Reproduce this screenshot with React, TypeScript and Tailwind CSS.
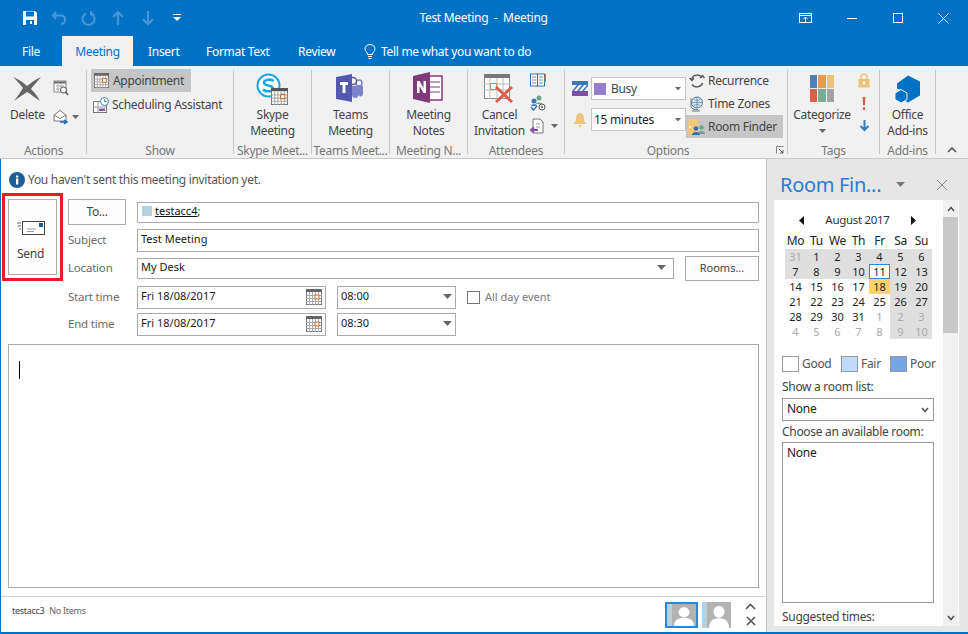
import React from "react";

const Cal = ({ s = 16, dark = "#666" }: { s?: number; dark?: string }) => (
  <svg width={s} height={s} viewBox="0 0 16 16" className="shrink-0">
    <rect x="0.5" y="0.5" width="15" height="15" fill="#fff" stroke="#777" />
    <rect x="0" y="0" width="16" height="3" fill={dark} />
    <path d="M0.5 6.5H15.5M0.5 9.5H15.5M0.5 12.5H15.5M3.5 3V16M6.5 3V16M9.5 3V16M12.5 3V16" stroke="#aaa" />
    <rect x="9" y="6" width="4" height="4" fill="#fff" stroke="#d2691e" />
  </svg>
);

const Big = ({ icon, lines }: { icon: React.ReactNode; lines: string[] }) => (
  <div className="flex flex-col items-center">
    <div className="h-[37px] flex items-center justify-center">{icon}</div>
    {lines.map((l) => (
      <div key={l} className="leading-[16px] whitespace-nowrap">{l}</div>
    ))}
  </div>
);

const Group = ({ w, label, children, className = "", labelClass = "" }: { w: string; label: string; children: React.ReactNode; className?: string; labelClass?: string }) => (
  <div className={`${w} shrink-0 h-[84px] border-r border-[#c6c6c6] flex flex-col relative`}>
    <div className={`h-[72px] flex ${className}`}>{children}</div>
    <div className={`h-[12px] leading-[17px] text-center text-[#777] whitespace-nowrap overflow-visible ${labelClass}`}>{label}</div>
  </div>
);

const SmallRow = ({ icon, text, active }: { icon: React.ReactNode; text: string; active?: boolean }) => (
  <div className={`h-[23px] flex items-center gap-[3px] pl-[2px] whitespace-nowrap ${active ? "bg-[#c6c6c6]" : ""}`}>
    <span className="w-[17px] flex justify-center">{icon}</span>
    {text}
  </div>
);

const Caret = ({ c = "#666", w = 7 }: { c?: string; w?: number }) => (
  <svg width={w} height={w / 2 + 0.5} viewBox="0 0 8 4.5" className="shrink-0">
    <path d="M0 0H8L4 4.5Z" fill={c} />
  </svg>
);

const Field = ({ className = "", children }: { className?: string; children?: React.ReactNode }) => (
  <div className={`border border-[#ababab] bg-white flex items-center pl-[3px] pb-[2px] text-[#1a1a1a] text-[11px] tracking-normal ${className}`}>{children}</div>
);

const Btn = ({ className = "", children }: { className?: string; children: React.ReactNode }) => (
  <div className={`border border-[#ababab] bg-[#fdfdfd] flex items-center justify-center text-[#444] ${className}`}>{children}</div>
);

const Label = ({ children }: { children: React.ReactNode }) => (
  <div className="w-[69px] shrink-0 text-[#6a6a6a] text-[11.5px] tracking-[-0.2px] pb-[2px] whitespace-nowrap">{children}</div>
);

const Avatar = ({ selected }: { selected?: boolean }) => (
  <div className={selected ? "border-2 border-[#2b88d8] w-[33px] h-[26px] flex shrink-0" : "w-[29px] h-[26px] flex ml-[4px] shrink-0"}>
    <div className="w-[5px] h-full bg-[#b6d0dc]" />
    <svg viewBox="0 0 24 24" className="flex-1 h-full bg-[#b3b3b3]" preserveAspectRatio="none">
      <circle cx="12" cy="9" r="5.5" fill="#fff" />
      <path d="M2 24C2 17 7 15 12 15S22 17 22 24Z" fill="#fff" />
    </svg>
  </div>
);

const days: { t: string; bg?: boolean; dim?: boolean; today?: boolean; sel?: boolean }[] = [];
const rows = [
  ["31", "1", "2", "3", "4", "5", "6"],
  ["7", "8", "9", "10", "11", "12", "13"],
  ["14", "15", "16", "17", "18", "19", "20"],
  ["21", "22", "23", "24", "25", "26", "27"],
  ["28", "29", "30", "31", "1", "2", "3"],
  ["4", "5", "6", "7", "8", "9", "10"],
];
rows.forEach((r, ri) =>
  r.forEach((t, ci) => {
    const weekend = ci >= 5;
    days.push({
      t,
      bg: ri < 2 || weekend,
      dim: (ri === 0 && ci === 0) || (ri === 4 && ci >= 4) || ri === 5,
      today: t === "11",
      sel: ri === 2 && ci === 4,
    });
  })
);

export default function App() {
  return (
    <div className="w-[968px] h-[634px] bg-[#0072c6] flex flex-col overflow-hidden font-['Noto_Sans',sans-serif] text-[12px] tracking-[-0.3px] text-[#444]">
      {/* title bar */}
      <div className="h-[36px] flex items-center relative text-white shrink-0">
        <div className="flex items-center pl-[22px] gap-[13px]">
          <svg width="16" height="16" viewBox="0 0 16 16">
            <path d="M1 1H13L15 3V15H1Z" fill="#fff" />
            <rect x="4" y="1.5" width="8" height="5" fill="#0072c6" />
            <rect x="4" y="10" width="8" height="5" fill="#0072c6" />
            <rect x="8" y="11" width="2" height="3" fill="#fff" />
          </svg>
          <svg width="16" height="16" viewBox="0 0 16 16" fill="none" stroke="#4a97d6" strokeWidth="2">
            <path d="M5 2L2 5.5L5 9M2 5.5H10C13 5.5 14 8 14 10C14 12.5 12 14 10 14" />
          </svg>
          <svg width="16" height="16" viewBox="0 0 16 16" fill="none" stroke="#4a97d6" strokeWidth="2">
            <path d="M6 3.5A6 6 0 1 0 11 3.5M11 1V4.5H14.5" />
          </svg>
          <svg width="16" height="16" viewBox="0 0 16 16" fill="none" stroke="#4a97d6" strokeWidth="2" className="ml-[1px]">
            <path d="M3 7L8 2L13 7M8 2V15" />
          </svg>
          <svg width="16" height="16" viewBox="0 0 16 16" fill="none" stroke="#4a97d6" strokeWidth="2" className="ml-[1px]">
            <path d="M3 9L8 14L13 9M8 14V1" />
          </svg>
          <svg width="10" height="10" viewBox="0 0 10 10" className="ml-[3px]">
            <path d="M1 1H9V2H1ZM1 4H9L5 8Z" fill="#fff" />
          </svg>
        </div>
        <div className="absolute left-0 right-0 top-[9px] text-center whitespace-pre pr-[1px] leading-[17px]">Test Meeting  -  Meeting</div>
        <div className="ml-auto flex items-center h-full mr-[19px]">
          <svg width="13" height="11" viewBox="0 0 13 11" fill="none" stroke="#fff" className="mr-[35px]">
            <rect x="0.5" y="0.5" width="12" height="9" />
            <path d="M0 2.5H13M6.5 9V4M4.5 6L6.5 4L8.5 6" />
          </svg>
          <div className="w-[10px] h-px bg-white mr-[36px]" />
          <div className="w-[10px] h-[10px] border border-white mr-[35px]" />
          <svg width="11" height="11" viewBox="0 0 11 11" stroke="#fff" fill="none"><path d="M0.5 0.5L10.5 10.5M10.5 0.5L0.5 10.5" /></svg>
        </div>
      </div>
      {/* tabs */}
      <div className="h-[30px] flex items-center text-white shrink-0 whitespace-nowrap">
        <div className="ml-[22px] w-[40px] pt-px">File</div>
        <div className="w-[71px] h-full bg-[#f1f1f1] text-[#0072c6] flex items-center justify-center pt-px">Meeting</div>
        <div className="ml-[15px] w-[58px] pt-px">Insert</div>
        <div className="w-[92px] pt-px">Format Text</div>
        <div className="w-[66px] pt-px">Review</div>
        <svg width="12" height="15" viewBox="0 0 12 15" fill="none" stroke="#fff" className="mr-[5px]">
          <path d="M3.5 10.5C3.5 8 1 7.5 1 4.8A5 4.3 0 0 1 11 4.8C11 7.5 8.5 8 8.5 10.5ZM4 12.5H8M4.5 14.5H7.5" />
        </svg>
        <div className="pt-px">Tell me what you want to do</div>
      </div>
      {/* ribbon */}
      <div className="h-[93px] bg-[#f1f1f1] border-b border-[#c8c8c8] pl-[1px] pt-[4px] flex shrink-0 relative">
        <Group w="w-[86px]" label="Actions" className="pl-[9px] gap-[8px]">
          <Big
            lines={["Delete"]}
            icon={
              <svg width="30" height="26" viewBox="0 0 30 26">
                <path d="M1 1C8 4 12 7 15 10C20 6 24 3 29 1C25 6 21 10 19 13C23 17 26 21 28 25C23 22 19 18 15 16C11 19 6 22 2 25C5 21 8 17 11 12C8 8 5 5 1 1Z" fill="#666" />
              </svg>
            }
          />
          <div className="flex flex-col gap-[13px] pt-[10px]">
            <svg width="16" height="16" viewBox="0 0 16 16" fill="none">
              <rect x="1" y="1" width="12" height="11" fill="#fff" stroke="#888" />
              <path d="M1 2.5H13" stroke="#666" strokeWidth="2" />
              <path d="M3 6H11M3 9H7M5 4V12M8 4V8" stroke="#aaa" />
              <circle cx="10.5" cy="10" r="3" fill="#fff" stroke="#555" />
              <path d="M12.5 12L15 15" stroke="#555" strokeWidth="1.5" />
            </svg>
            <div className="flex items-center gap-[3px]">
              <svg width="16" height="16" viewBox="0 0 16 16" fill="none">
                <path d="M1 6L7 1.5L13 6V12H1Z" fill="#fff" stroke="#777" />
                <path d="M1 6L7 9.5L13 6" stroke="#777" />
                <path d="M7 13H13M11 11L14 13L11 15" stroke="#1f6fb5" strokeWidth="1.5" />
              </svg>
              <Caret />
            </div>
          </div>
        </Group>
        <Group w="w-[147px]" label="Show" className="pl-[4px] pr-[42px] flex-col">
          <div className="-mt-[1px] mb-[1px] w-[100px]">
            <SmallRow active text="Appointment" icon={<Cal s={15} />} />
          </div>
          <div>
            <SmallRow
              text="Scheduling Assistant"
              icon={
                <svg width="16" height="16" viewBox="0 0 16 16" fill="none">
                  <rect x="0.5" y="4.5" width="13" height="11" fill="#fff" stroke="#777" />
                  <path d="M0.5 10H13.5M5 4.5V15.5" stroke="#999" />
                  <rect x="6" y="11.5" width="6" height="2.5" fill="#8a5aa8" />
                  <circle cx="11.5" cy="4.5" r="4" fill="#fff" stroke="#4a7fb5" />
                  <path d="M11.5 2.5V4.5H13.5" stroke="#4a7fb5" />
                </svg>
              }
            />
          </div>
        </Group>
        <Group w="w-[78px]" label="Skype Meet..." className="justify-center">
          <Big
            lines={["Skype", "Meeting"]}
            icon={
              <svg width="33" height="33" viewBox="0 0 33 33" className="mt-[1px]">
                <circle cx="12.5" cy="12.5" r="11" fill="#fff" stroke="#1ca6e6" strokeWidth="2" />
                <path d="M17.5 8C15.5 6 8.5 6 8 9.5C7.5 13.5 17.5 11.5 17 16C16.5 19 9.5 19 7 16.5" fill="none" stroke="#1ca6e6" strokeWidth="2.6" />
                <g transform="translate(15 15)"><Cal s={17} dark="#555" /></g>
              </svg>
            }
          />
        </Group>
        <Group w="w-[78px]" label="Teams Meet..." className="justify-center">
          <Big
            lines={["Teams", "Meeting"]}
            icon={
              <svg width="30" height="30" viewBox="0 0 30 30" className="-mt-[1px]">
                <circle cx="24" cy="10" r="3" fill="#fff" stroke="#7b83c8" strokeWidth="1.5" />
                <circle cx="18" cy="8" r="3.5" fill="#fff" stroke="#5558af" strokeWidth="1.5" />
                <path d="M17 13H28V21C28 24 24 24 23 22V24C21 26 17 25 17 22Z" fill="#7b83c8" />
                <path d="M1 4L17 1V29L1 26Z" fill="#5558af" />
                <path d="M5 9H13V12H10.5V20H7.5V12H5Z" fill="#fff" />
              </svg>
            }
          />
        </Group>
        <Group w="w-[78px]" label="Meeting N..." className="justify-center">
          <Big
            lines={["Meeting", "Notes"]}
            icon={
              <svg width="30" height="32" viewBox="0 0 30 32" className="-mt-[1px]">
                <rect x="14" y="4" width="15" height="24" fill="#fff" stroke="#80397b" strokeWidth="1.5" />
                <path d="M15 10H27M15 15H27M15 20H27" stroke="#80397b" />
                <path d="M0 4L17 0V31L0 27Z" fill="#80397b" />
                <path d="M4 21V9H6.5L10.5 16V9H13V21H10.5L6.5 14V21Z" fill="#fff" />
              </svg>
            }
          />
        </Group>
        <Group w="w-[97px]" label="Attendees" className="pl-[6px] gap-[5px]">
          <Big
            lines={["Cancel", "Invitation"]}
            icon={
              <svg width="30" height="30" viewBox="0 0 30 30">
                <rect x="0.5" y="0.5" width="25" height="24" fill="#fff" stroke="#888" />
                <rect x="0" y="0" width="26" height="4" fill="#777" />
                <path d="M0 10H26M0 16H26M6 4V25M13 4V25M19 4V25" stroke="#bbb" />
                <rect x="6.5" y="9.5" width="6" height="6" fill="#fff" stroke="#e08a3c" />
                <path d="M12 13L28 28M28 13L12 28" stroke="#d9604a" strokeWidth="3" />
              </svg>
            }
          />
          <div className="flex flex-col pt-[3px]">
            <svg width="16" height="14" viewBox="0 0 16 14" fill="none">
              <rect x="0.5" y="1" width="7" height="12" fill="#fff" stroke="#2a74b8" />
              <rect x="7.5" y="1" width="7" height="12" fill="#fff" stroke="#2a74b8" />
              <path d="M2 4H6M2 7H6M2 10H6M9 4H13M9 7H13M9 10H13" stroke="#888" />
              <path d="M15.5 1V5" stroke="#d9604a" strokeWidth="2" />
              <path d="M15.5 5V9" stroke="#6ea06e" strokeWidth="2" />
            </svg>
            <svg width="16" height="16" viewBox="0 0 16 16" fill="none" className="mt-[8px]">
              <circle cx="9" cy="3" r="2.5" fill="#6ea58a" />
              <path d="M6 9C6 7 12 7 12 9Z" fill="#6ea58a" />
              <circle cx="4" cy="6" r="2.5" fill="#3f78b5" />
              <path d="M1 11C1 8.5 7 8.5 7 11Z" fill="#3f78b5" />
              <path d="M1 12L3.5 15L7 11" stroke="#3f78b5" strokeWidth="1.5" />
              <circle cx="12" cy="12" r="3" stroke="#555" />
              <circle cx="12" cy="12" r="1" fill="#555" />
            </svg>
            <div className="flex items-center gap-[5px] mt-[7px]">
              <svg width="16" height="16" viewBox="0 0 16 16" fill="none">
                <path d="M3 1H10L13 4V15H3Z" fill="#fff" stroke="#777" />
                <path d="M6 6H10M6 9H10" stroke="#999" />
                <path d="M8 12H1M4 9.5L1 12L4 14.5" stroke="#8a4fb0" strokeWidth="2" />
              </svg>
              <Caret />
            </div>
          </div>
        </Group>
        <Group w="w-[223px]" label="Options" className="pl-[7px]" labelClass="pr-[16px]">
          <div className="flex flex-col gap-[8px] w-[114px] pt-[7px]">
            <div className="flex items-center gap-[3px]">
              <svg width="16" height="16" viewBox="0 0 16 16">
                <rect x="0" y="0" width="16" height="4" fill="#3a78c2" />
                <path d="M0 4H16V11H0Z" fill="#f1f1f1" />
                <path d="M0 10L5 4H7L2 10ZM5 10L10 4H12L7 10ZM10 10L15 4H16V5L12 10Z" fill="#3a78c2" />
                <rect x="0" y="10" width="16" height="5" fill="#7d4fa8" />
              </svg>
              <div className="h-[23px] w-[95px] bg-white border border-[#c6c6c6] flex items-center pl-[2px] shrink-0">
                <span className="w-[12px] h-[12px] bg-[#957cd1] mr-[5px]" />
                <span className="flex-1">Busy</span>
                <span className="mr-[4px] flex"><Caret c="#666" w={6} /></span>
              </div>
            </div>
            <div className="flex items-center gap-[3px]">
              <svg width="16" height="16" viewBox="0 0 16 16">
                <path d="M8 1C5 1 4 4 4 7C4 10 2.5 10.5 1.5 12H14.5C13.5 10.5 12 10 12 7C12 4 11 1 8 1Z" fill="#f0c27b" />
                <path d="M6 13.5H10L8 15.5Z" fill="#f0c27b" />
              </svg>
              <div className="h-[23px] w-[95px] bg-white border border-[#c6c6c6] flex items-center pl-[2px] shrink-0 text-[#222]">
                <span className="flex-1 whitespace-nowrap">15 minutes</span>
                <span className="mr-[4px] flex"><Caret c="#666" w={6} /></span>
              </div>
            </div>
          </div>
          <div className="w-[97px] -mt-[1px]">
            <SmallRow
              text="Recurrence"
              icon={
                <svg width="16" height="16" viewBox="0 0 16 16" fill="none" stroke="#555" strokeWidth="1.3">
                  <path d="M2.5 6A6 6 0 0 1 13 4.5M13.5 10A6 6 0 0 1 3 11.5" />
                  <path d="M0.5 5L3 7.5L5 5M11 5L13.5 2.5L15.5 5" />
                </svg>
              }
            />
            <SmallRow
              text="Time Zones"
              icon={
                <svg width="15" height="16" viewBox="0 0 15 16" fill="none">
                  <circle cx="8" cy="6.5" r="5.5" fill="#d7e4f0" stroke="#5a7f9e" />
                  <path d="M3 6.5H13M8 1V12M4.5 3C7 5 9 5 11.5 3M4.5 10C7 8 9 8 11.5 10" stroke="#5a7f9e" strokeWidth="0.7" />
                  <path d="M2 2V11C3 13 6 14 9 13.5M3 15H11" stroke="#777" />
                </svg>
              }
            />
            <SmallRow
              active
              text="Room Finder"
              icon={
                <svg width="17" height="16" viewBox="0 0 17 16">
                  <rect x="0" y="0" width="10" height="16" fill="#f2c77e" />
                  <circle cx="2" cy="8" r="1" fill="#fff" />
                  <circle cx="13.5" cy="8.5" r="2.3" fill="#6ea58a" />
                  <path d="M10 15C10 11 17 11 17 15Z" fill="#6ea58a" />
                  <circle cx="8" cy="9.5" r="2.3" fill="#2f6fb5" />
                  <path d="M4 16C4 12 12 12 12 16Z" fill="#2f6fb5" />
                </svg>
              }
            />
          </div>
          <svg width="8" height="8" viewBox="0 0 8 8" fill="none" className="absolute right-[3px] top-[76px]">
            <path d="M0.5 7.5V0.5H7.5" stroke="#888" />
            <path d="M3 3L7 7M7 4V7H4" stroke="#555" />
          </svg>
        </Group>
        <Group w="w-[92px]" label="Tags" className="pl-[4px] gap-[4px]">
          <div className="flex flex-col items-center w-[60px]">
            <div className="h-[37px] flex items-center">
              <div className="grid grid-cols-3 gap-px w-[24px]">
                <div className="h-[13px] bg-[#4f81b8]" />
                <div className="h-[13px] bg-[#e89a4f]" />
                <div className="h-[13px] bg-[#eac27f]" />
                <div className="h-[13px] bg-[#db6045]" />
                <div className="h-[13px] bg-[#7aab95]" />
                <div className="h-[13px] bg-[#a3a3a3]" />
              </div>
            </div>
            <div className="leading-[16px]">Categorize</div>
            <div className="h-[16px] flex items-center"><Caret /></div>
          </div>
          <div className="flex flex-col items-center pt-[3px] w-[16px]">
            <svg width="12" height="15" viewBox="0 0 12 15">
              <path d="M3 7V4A3 3 0 0 1 9 4V7" fill="none" stroke="#efc27c" strokeWidth="1.5" />
              <rect x="0.5" y="6" width="11" height="8.5" fill="#efc27c" />
              <rect x="5" y="8.5" width="2" height="3" fill="#fff" />
            </svg>
            <svg width="4" height="13" viewBox="0 0 4 14" className="mt-[9px]">
              <path d="M0.5 0H3.5L3 9H1Z M0.8 11H3.2V14H0.8Z" fill="#dc5a45" />
            </svg>
            <svg width="11" height="12" viewBox="0 0 10 12" fill="none" stroke="#3d78b8" strokeWidth="2" className="mt-[10px]">
              <path d="M5 0V10M1 6L5 10L9 6" />
            </svg>
          </div>
        </Group>
        <Group w="w-[56px]" label="Add-ins" className="justify-center">
          <Big
            lines={["Office", "Add-ins"]}
            icon={
              <svg width="28" height="29" viewBox="0 0 28 28" className="mt-[1px]">
                <path d="M15 0L27 6V20L15 27L10 24V15L4 13V8Z" fill="#0072c6" />
                <path d="M8 14L14 17.5V24L8 27.5L2 24V17.5Z" fill="#0072c6" stroke="#f1f1f1" />
              </svg>
            }
          />
        </Group>
        <svg width="10" height="6" viewBox="0 0 10 6" fill="none" stroke="#555" strokeWidth="1.6" className="absolute left-[947px] top-[81px]">
          <path d="M1 5L5 1L9 5" />
        </svg>
      </div>
      {/* main */}
      <div className="flex-1 min-h-0 ml-px mb-[2px] flex bg-white">
        {/* form */}
        <div className="w-[766px] shrink-0 flex flex-col border-r border-[#c6c6c6] pr-[7px]">
          <div className="h-[34px] flex items-center pl-[8px] gap-[3px] pt-[8px] shrink-0 text-[#555] whitespace-nowrap">
            <svg width="16" height="16" viewBox="0 0 16 16">
              <circle cx="8" cy="8" r="8" fill="#1f5f99" />
              <rect x="7" y="6.5" width="2.3" height="6" fill="#fff" />
              <rect x="7" y="3.5" width="2.3" height="2" fill="#fff" />
            </svg>
            <span>You haven't sent this meeting invitation yet.</span>
          </div>
          <div className="flex shrink-0 pl-px">
            <div className="w-[61px] h-[88px] border-[3px] border-[#ed1c24] p-[3px] shrink-0">
              <Btn className="w-full h-full flex-col !justify-start pt-[21px] pr-[4px]">
                <svg width="28" height="16" viewBox="0 0 28 16" fill="none" className="mb-[9px] shrink-0">
                  <rect x="5.5" y="0.5" width="22" height="13" fill="#fff" stroke="#444" />
                  <rect x="22" y="2" width="4" height="4" fill="#1f5f99" />
                  <path d="M10 8H19M10 10.5H17" stroke="#999" />
                  <path d="M0 2H4M1 5H4M2 8H4" stroke="#666" />
                </svg>
                <span className="leading-[16px]">Send</span>
              </Btn>
            </div>
            <div className="flex-1 min-w-0 flex flex-col pl-[5px] pt-[6px]">
              <div className="flex items-center h-[26px]">
                <Btn className="w-[58px] h-[26px] shrink-0 mr-[11px]">To...</Btn>
                <Field className="flex-1 h-[21px] min-w-0 !pl-[4px]">
                  <span className="w-[10px] h-[10px] bg-[#b6d0dc] mr-[3px]" />
                  <span className="underline text-[#111]">testacc4</span>
                  <span>;</span>
                </Field>
              </div>
              <div className="flex items-center h-[23px] mt-[4px]">
                <Label>Subject</Label>
                <Field className="flex-1 h-[23px]">Test Meeting</Field>
              </div>
              <div className="flex items-center h-[25px] mt-[4px]">
                <Label>Location</Label>
                <Field className="w-[537px] h-[21px] justify-between pr-[7px]">
                  My Desk
                  <Caret w={9} />
                </Field>
                <Btn className="ml-auto w-[74px] h-[25px] text-[11px] tracking-normal">Rooms...</Btn>
              </div>
              <div className="flex items-center h-[23px] mt-[5px]">
                <Label>Start time</Label>
                <Field className="w-[189px] h-[23px] justify-between pr-[3px]">
                  Fri 18/08/2017
                  <Cal />
                </Field>
                <Field className="w-[119px] h-[23px] ml-[11px] justify-between pr-[3px]">
                  08:00
                  <Caret w={9} />
                </Field>
                <div className="w-[13px] h-[13px] border border-[#777] ml-[11px] mr-[5px]" />
                <span className="text-[#777] text-[11px] tracking-normal whitespace-nowrap">All day event</span>
              </div>
              <div className="flex items-center h-[23px] mt-[4px]">
                <Label>End time</Label>
                <Field className="w-[189px] h-[23px] justify-between pr-[3px]">
                  Fri 18/08/2017
                  <Cal />
                </Field>
                <Field className="w-[119px] h-[23px] ml-[11px] justify-between pr-[3px]">
                  08:30
                  <Caret w={9} />
                </Field>
              </div>
            </div>
          </div>
          <div className="h-[244px] ml-[7px] mt-[8px] border border-[#ababab] shrink-0 pl-[10px] pt-[16px]">
            <div className="w-px h-[18px] bg-black" />
          </div>
          <div className="mt-[8px] border-t border-[#d2d2d2] -mr-[7px] flex-1 min-h-0 flex items-center pl-[11px] pr-[10px]">
            <span className="text-[9px] text-[#444] mr-[5px] mb-[8px]">testacc3</span>
            <span className="text-[9px] text-[#666] mb-[8px]">No Items</span>
            <div className="ml-auto flex items-center">
              <Avatar selected />
              <Avatar />
              <div className="ml-[14px] flex flex-col items-center gap-[6px]">
                <svg width="11" height="7" viewBox="0 0 11 7" fill="none" stroke="#555" strokeWidth="1.6"><path d="M1 6L5.5 1.5L10 6" /></svg>
                <svg width="10" height="10" viewBox="0 0 10 10" fill="none" stroke="#555" strokeWidth="1.6"><path d="M1 1L9 9M9 1L1 9" /></svg>
              </div>
            </div>
          </div>
        </div>
        {/* task pane */}
        <div className="flex-1 min-w-0 bg-[#e6e6e6] flex flex-col">
          <div className="h-[41px] shrink-0 flex items-center pl-[13px] pt-[10px] pr-[20px]">
            <span className="text-[20px] text-[#2b7cd3] leading-[26px] whitespace-nowrap w-[114px]">Room Fin...</span>
            <span className="ml-[2px] flex"><Caret c="#777" w={9} /></span>
            <svg width="12" height="12" viewBox="0 0 12 12" stroke="#888" fill="none" className="ml-auto"><path d="M1 1L11 11M11 1L1 11" /></svg>
          </div>
          <div className="ml-[7px] mr-[9px] flex-1 min-h-0 mb-[6px] flex bg-white">
            <div className="w-[169px] shrink-0 flex flex-col pl-[8px] text-[#222]">
              <div className="flex items-center justify-center h-[20px] mt-[10px] pr-[8px] w-[159px]">
                <svg width="5" height="9" viewBox="0 0 5 9"><path d="M5 0V9L0 4.5Z" fill="#111" /></svg>
                <span className="mx-[21px] text-[#333] text-[11.5px]">August 2017</span>
                <svg width="5" height="9" viewBox="0 0 5 9"><path d="M0 0V9L5 4.5Z" fill="#111" /></svg>
              </div>
              <div className="grid grid-cols-7 w-[147px] ml-[3px] mt-[2px] h-[17px] text-center leading-[17px]">
                {["Mo", "Tu", "We", "Th", "Fr", "Sa", "Su"].map((d) => (
                  <div key={d}>{d}</div>
                ))}
              </div>
              <div className="grid grid-cols-7 w-[147px] ml-[3px] text-center text-[11px] tracking-normal leading-[15px]">
                {days.map((d, i) => (
                  <div
                    key={i}
                    className={`h-[15px] ${d.sel ? "bg-[#ffd36b]" : d.today ? "bg-white border border-[#2b88d8] leading-[13px]" : d.bg ? "bg-[#dfdfdf]" : ""} ${d.dim ? "text-[#aaa]" : ""}`}
                  >
                    {d.t}
                  </div>
                ))}
              </div>
              <div className="flex items-center mt-[17px] text-[#555] h-[16px]">
                <span className="w-[17px] h-[16px] border border-[#999] bg-white mr-[3px]" />
                <span className="w-[39px]">Good</span>
                <span className="w-[17px] h-[16px] border border-[#999] bg-[#c0dafb] mr-[3px]" />
                <span className="w-[29px]">Fair</span>
                <span className="w-[17px] h-[16px] border border-[#999] bg-[#76a5e3] mr-[3px]" />
                <span>Poor</span>
              </div>
              <div className="mt-[7px] leading-[16px] text-[#444]">Show a room list:</div>
              <div className="mt-[3px] w-[152px] h-[23px] border border-[#999] flex items-center justify-between pl-[4px] pr-[4px] pb-[2px] text-[#222]">
                None
                <svg width="8" height="6" viewBox="0 0 8 6" fill="none" stroke="#555" strokeWidth="1.6" className="mt-[3px]"><path d="M1 1L4 4.5L7 1" /></svg>
              </div>
              <div className="mt-[3px] leading-[16px] text-[#444]">Choose an available room:</div>
              <div className="mt-[2px] w-[152px] h-[161px] border border-[#999] pl-[4px] pt-px text-[#222] shrink-0">None</div>
              <div className="mt-[6px] leading-[16px] text-[#444]">Suggested times:</div>
            </div>
            <div className="w-[15px] shrink-0 bg-[#f0f0f0] flex flex-col items-center">
              <div className="h-[17px] flex items-center justify-center">
                <svg width="8" height="6" viewBox="0 0 8 6" fill="none" stroke="#555" strokeWidth="1.6"><path d="M1 5L4 1.5L7 5" /></svg>
              </div>
              <div className="w-full h-[116px] bg-[#c8c8c8]" />
              <div className="mt-auto h-[17px] flex items-center justify-center">
                <svg width="8" height="6" viewBox="0 0 8 6" fill="none" stroke="#555" strokeWidth="1.6"><path d="M1 1L4 4.5L7 1" /></svg>
              </div>
            </div>
          </div>
        </div>
      </div>
    </div>
  );
}
